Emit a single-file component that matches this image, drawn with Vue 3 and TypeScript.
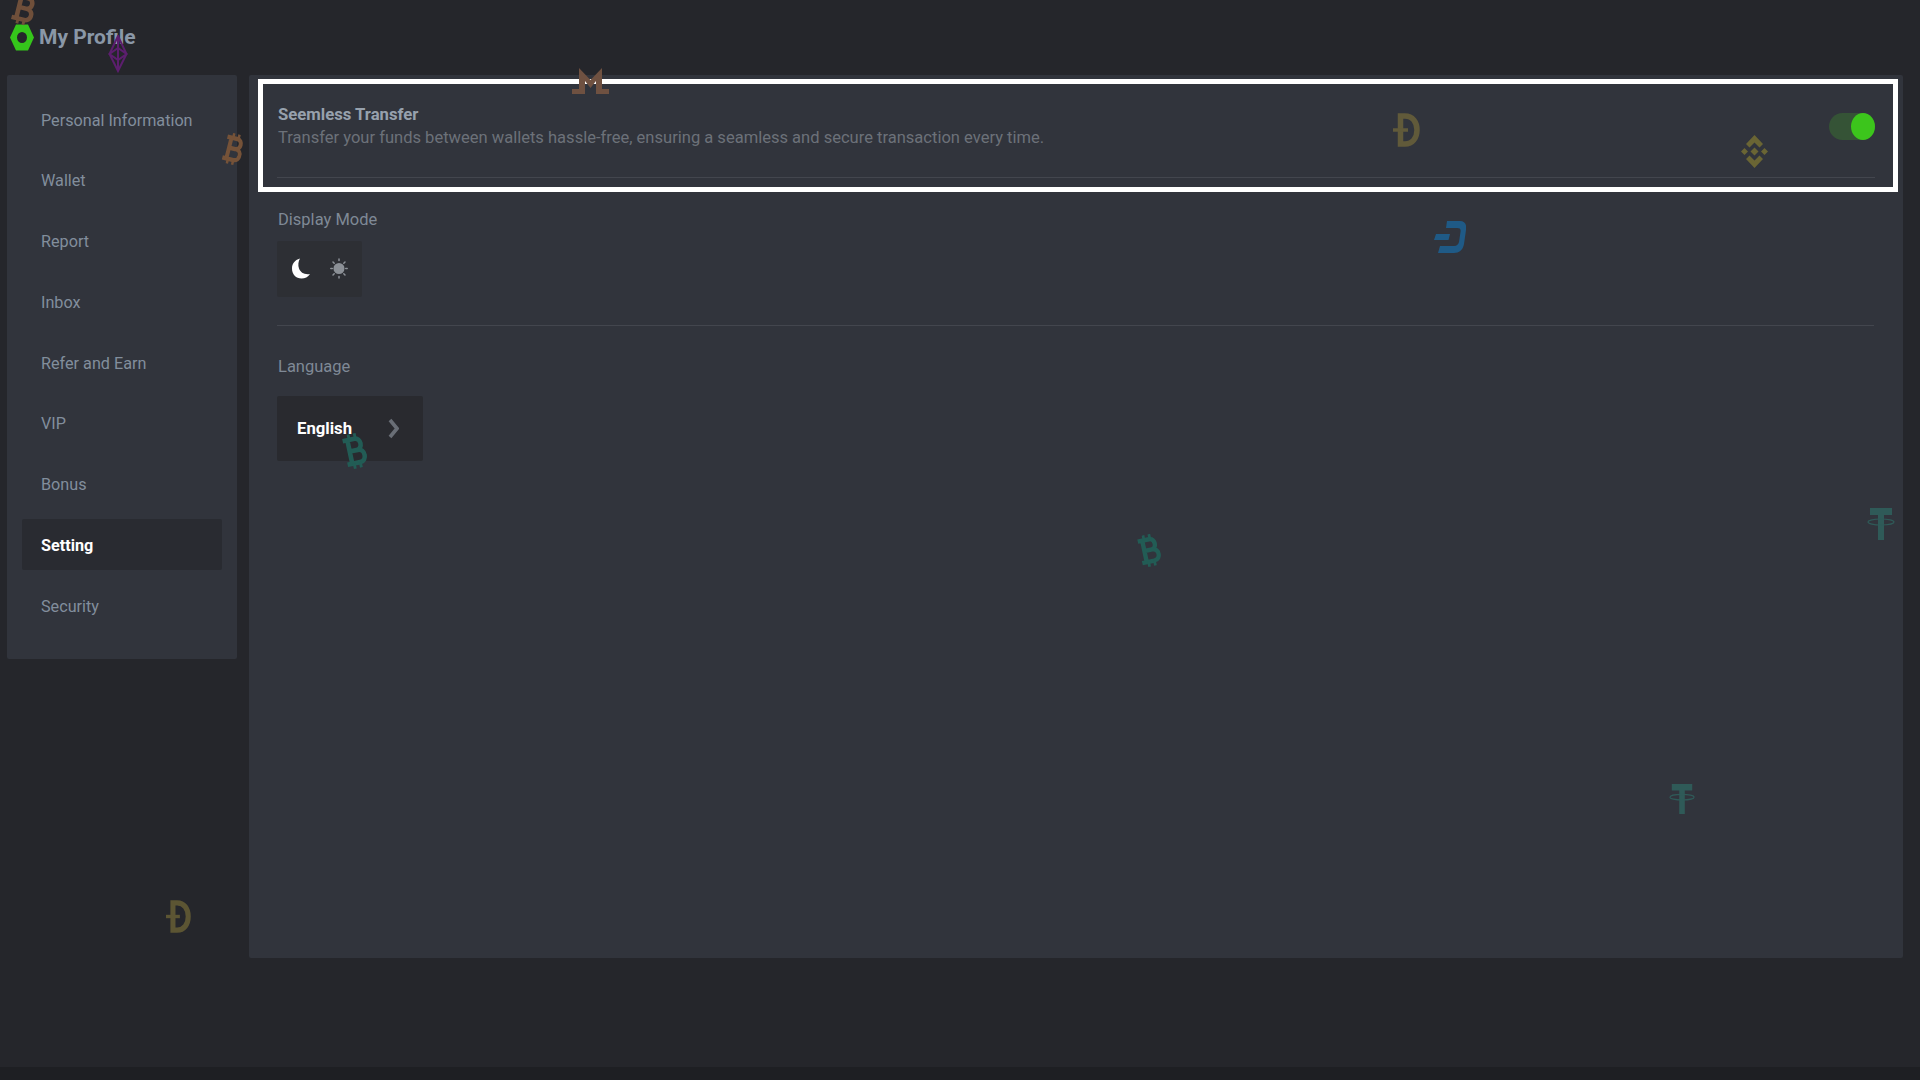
<script setup lang="ts">
interface Coin {
  kind: string
  x: number
  y: number
  w: number
  h: number
  color: string
  rot: number
}

const menu: string[] = [
  'Personal Information',
  'Wallet',
  'Report',
  'Inbox',
  'Refer and Earn',
  'VIP',
  'Bonus',
  'Setting',
  'Security',
]

const coins: Coin[] = [
  { kind: 'dash', x: -29, y: -26, w: 32, h: 32, color: '#1f5a86', rot: 0 },
  { kind: 'btc', x: 12, y: -8, w: 23, h: 33, color: '#6f4f3a', rot: 14 },
  { kind: 'eth', x: 108, y: 35, w: 20, h: 38, color: '#5c1e6e', rot: 0 },
  { kind: 'btc', x: 223, y: 133, w: 20, h: 32, color: '#755238', rot: 14 },
  { kind: 'xmr', x: 572, y: 68, w: 37, h: 26, color: '#6f5141', rot: 0 },
  { kind: 'doge', x: 1393, y: 113, w: 27, h: 34, color: '#615a3a', rot: 0 },
  { kind: 'bnb', x: 1741, y: 135, w: 27, h: 33, color: '#6a6534', rot: 0 },
  { kind: 'dash', x: 1434, y: 221, w: 32, h: 32, color: '#1f5a86', rot: 0 },
  { kind: 'btc', x: 343, y: 433, w: 23, h: 36, color: '#225c55', rot: -12 },
  { kind: 'btc', x: 1138, y: 534, w: 22, h: 33, color: '#225c55', rot: -12 },
  { kind: 'usdt', x: 1867, y: 508, w: 28, h: 32, color: '#2f5a58', rot: 0 },
  { kind: 'usdt', x: 1669, y: 784, w: 26, h: 30, color: '#2f5a58', rot: 0 },
  { kind: 'doge', x: 166, y: 900, w: 25, h: 33, color: '#5c5533', rot: 0 },
]

const boxes: Record<string, string> = {
  btc: '0 0 24 36',
  eth: '0 0 20 38',
  xmr: '0 0 37 26',
  bnb: '0 0 27 33',
  usdt: '0 0 28 32',
  doge: '0 0 27 34',
  dash: '0 0 32 32',
}

function coinStyle(c: Coin) {
  return {
    left: `${c.x}px`,
    top: `${c.y}px`,
    width: `${c.w}px`,
    height: `${c.h}px`,
    color: c.color,
    transform: `rotate(${c.rot}deg)`,
  }
}
</script>

<template>
  <div class="page">
    <header class="head">
      <svg class="logo" viewBox="0 0 24 27">
        <path fill-rule="evenodd" fill="#35c61b" d="M6 0.5H18L24 13.5L18 26.5H6L0 13.5ZM12 8A5 5.500 0 1 0 12 19A5 5.500 0 1 0 12 8Z" />
      </svg>
      <span class="title">My Profile</span>
    </header>

    <div class="body">
      <nav class="side">
        <a v-for="m in menu" :key="m" class="item" :class="{ on: m === 'Setting' }">{{ m }}</a>
      </nav>

      <main class="main">
        <section class="hl">
          <div class="hl-row">
            <div class="copy">
              <div class="st">Seemless Transfer</div>
              <div class="sd">Transfer your funds between wallets hassle-free, ensuring a seamless and secure transaction every time.</div>
            </div>
            <div class="toggle"><span class="knob"></span></div>
          </div>
          <div class="rule"></div>
        </section>

        <section class="group">
          <div class="label">Display Mode</div>
          <div class="mode">
            <svg class="mi" viewBox="0 0 18 21">
              <path fill="#fff" d="M8 0.5C2.500 2 0 6 0 10.500C0 16.500 4 20.500 9.500 20.500C13 20.500 16 19 18 16C12.500 17 8.500 14.500 7 10.500C5.800 7 6.300 3.500 8 0.500Z" />
            </svg>
            <svg class="mi" viewBox="0 0 18 21">
              <circle cx="9" cy="10.500" r="5.500" fill="#8b9096" />
              <g stroke="#8b9096" stroke-width="1.500" stroke-linecap="round">
                <path d="M9 1V2.500M9 18.500V20M0.800 10.500H2.300M15.700 10.500H17.200M3 4L4.200 5.200M13.800 15.800L15 17M3 17L4.200 15.800M13.800 5.200L15 4" />
              </g>
            </svg>
          </div>
          <div class="rule r2"></div>
          <div class="label l2">Language</div>
          <div class="lang">
            <span>English</span>
            <svg class="chev" viewBox="0 0 11 21">
              <path d="M2 2L9 10.500L2 19" fill="none" stroke="#696e76" stroke-width="3.600" />
            </svg>
          </div>
        </section>
      </main>
    </div>

    <footer class="foot"></footer>

    <svg
      v-for="(c, i) in coins"
      :key="i"
      class="coin"
      :style="coinStyle(c)"
      :viewBox="boxes[c.kind]"
      preserveAspectRatio="none"
    >
      <g v-if="c.kind === 'btc'" fill="none" stroke="currentColor" stroke-width="4.800">
        <path d="M2 6H14.500C21.500 6 21.500 17.500 14.500 17.500H7M7 17.500H15.500C23.500 17.500 23.500 30 15.500 30H2M7 6V30" />
        <path stroke-width="3" d="M9 0.500V6M15.500 0.500V6M9 30V35.500M15.500 30V35.500" />
      </g>
      <g v-else-if="c.kind === 'eth'" fill="none" stroke="currentColor" stroke-width="2">
        <path d="M10 1L1.500 19L10 36L18.500 19ZM1.500 19L10 13L18.500 19L10 25ZM10 1V36" />
      </g>
      <path v-else-if="c.kind === 'xmr'" fill="currentColor" d="M7 0L18.500 12L30 0V21H37V26H24V13L18.500 20L13 13V26H0V21H7Z" />
      <g v-else-if="c.kind === 'doge'" fill="none" stroke="currentColor">
        <path stroke-width="5.500" d="M7.500 3H12C19.500 3 24 9 24 17C24 25 19.500 31 12 31H7.500Z" />
        <path stroke-width="3.500" d="M0 17H15" />
      </g>
      <path v-else-if="c.kind === 'bnb'" fill="currentColor" d="M13.500 0L22 9L18.500 12.500L13.500 7.500L8.500 12.500L5 9ZM13.500 33L5 24L8.500 20.500L13.500 25.500L18.500 20.500L22 24ZM13.500 12.500L17.500 16.500L13.500 20.500L9.500 16.500ZM3.500 13L7 16.500L3.500 20L0 16.500ZM23.500 13L27 16.500L23.500 20L20 16.500Z" />
      <g v-else-if="c.kind === 'usdt'">
        <path fill="currentColor" d="M3 0H25V7H17V32H11V7H3Z" />
        <ellipse cx="14" cy="14" rx="13" ry="3" fill="none" stroke="currentColor" stroke-width="1.200" />
      </g>
      <path v-else fill="currentColor" d="M13 0H26C31 0 33 4 32 9L30 23C29 29 25 32 20 32H4L6 25H20C23 25 24.500 23 25 21L26.500 11C27 8 26 7 23 7H12ZM2 13H16L14.500 19H0Z" />
    </svg>
  </div>
</template>

<style>
html,
body {
  margin: 0;
  background: #25262b;
}
</style>

<style scoped>
.page {
  position: relative;
  width: 1920px;
  height: 1080px;
  overflow: hidden;
  display: flex;
  flex-direction: column;
  background: #25262b;
  font-family: Roboto, "Liberation Sans", sans-serif;
  color: #828e9c;
}
.head {
  height: 75px;
  flex: none;
  display: flex;
  align-items: center;
  padding-left: 10px;
  gap: 5px;
  box-sizing: border-box;
}
.logo {
  width: 24px;
  height: 27px;
}
.title {
  margin-bottom: 2px;
  font-size: 21px;
  font-weight: 700;
  color: #8a97a7;
}
.body {
  flex: 1;
  display: flex;
  align-items: flex-start;
  padding: 0 17px 0 7px;
  gap: 12px;
}
.side {
  width: 230px;
  height: 584px;
  flex: none;
  box-sizing: border-box;
  padding: 18px 15px 0;
  background: #31343c;
  border-radius: 2px;
}
.item {
  display: flex;
  align-items: center;
  height: 51px;
  box-sizing: border-box;
  padding: 3px 0 0 19px;
  margin-bottom: 9.800px;
  font-size: 16.200px;
  border-radius: 2px;
}
.item.on {
  background: #292b31;
  color: #fff;
  font-weight: 700;
}
.main {
  flex: 1;
  height: 883px;
  box-sizing: border-box;
  padding: 4px 5px 0 9px;
  background: #31343c;
  border-radius: 2px;
}
.hl {
  height: 113px;
  box-sizing: border-box;
  border: 5px solid #fff;
  padding: 19px 18px 0 14px;
}
.hl-row {
  display: flex;
  justify-content: space-between;
  align-items: flex-start;
  height: 74px;
}
.copy {
  padding-left: 1px;
}
.st {
  font-size: 16.700px;
  font-weight: 700;
  line-height: 23px;
  color: #97a1ad;
}
.sd {
  font-size: 16.550px;
  line-height: 23px;
  color: #6c7179;
}
.toggle {
  position: relative;
  width: 46px;
  height: 27px;
  margin-top: 10px;
  border-radius: 14px;
  background: #355336;
}
.knob {
  position: absolute;
  right: 0;
  top: 0;
  width: 24px;
  height: 27px;
  border-radius: 50%;
  background: #3cc51c;
}
.rule {
  height: 1px;
  background: #43464e;
}
.group {
  padding: 16px 24px 0 19px;
}
.label {
  padding-left: 1px;
  font-size: 16.500px;
  line-height: 24px;
  color: #7f8996;
}
.mode {
  width: 85px;
  height: 56px;
  margin-top: 9px;
  box-sizing: border-box;
  padding: 0 0 2px 15px;
  display: flex;
  align-items: center;
  gap: 20px;
  background: #2d2f34;
  border-radius: 2px;
}
.mi {
  width: 18px;
  height: 21px;
}
.r2 {
  margin-top: 28px;
}
.l2 {
  margin-top: 29px;
}
.lang {
  width: 146px;
  height: 65px;
  margin-top: 17px;
  box-sizing: border-box;
  padding: 0 24px 0 20px;
  display: flex;
  align-items: center;
  justify-content: space-between;
  background: #292a2f;
  border-radius: 2px;
  color: #fff;
  font-size: 16.700px;
  font-weight: 700;
}
.chev {
  width: 11px;
  height: 21px;
}
.foot {
  position: absolute;
  left: 0;
  right: 0;
  bottom: 0;
  height: 13px;
  background: #1e1f23;
}
.coin {
  position: absolute;
  pointer-events: none;
}
</style>
